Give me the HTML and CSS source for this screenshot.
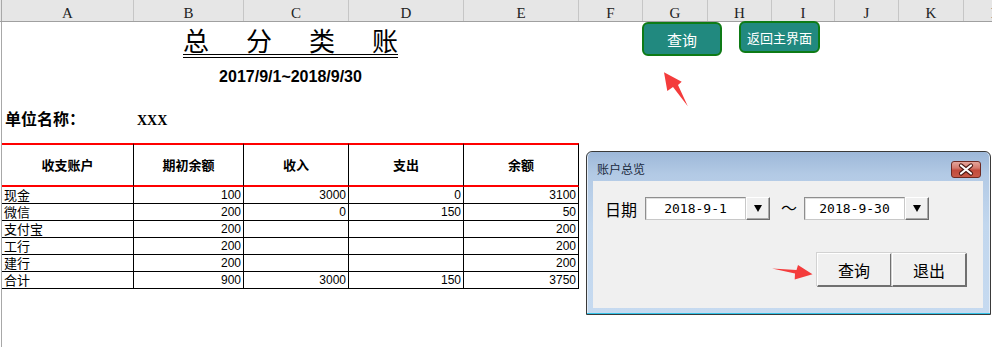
FILE: index.html
```html
<!DOCTYPE html>
<html lang="zh-CN">
<head>
<meta charset="utf-8">
<title>总分类账</title>
<link rel="stylesheet" href="styles.css">
</head>
<body>
<div class="colbar">
  <div class="corner"></div>
  <div class="ch w-a">A</div>
  <div class="ch w-b">B</div>
  <div class="ch w-c">C</div>
  <div class="ch w-d">D</div>
  <div class="ch w-e">E</div>
  <div class="ch w-f">F</div>
  <div class="ch w-g">G</div>
  <div class="ch w-h">H</div>
  <div class="ch w-i">I</div>
  <div class="ch w-j">J</div>
  <div class="ch w-k">K</div>
  <div class="ch w-l">L</div>
</div>

<div class="sheet">
  <div class="title-row">
    <h1 class="title"><span>总</span><span>分</span><span>类</span><span>账</span></h1>
  </div>
  <div class="date-row">2017/9/1~2018/9/30</div>
  <div class="unit-row">
    <span class="unit-label">单位名称：</span>
    <span class="unit-val">XXX</span>
  </div>

  <div class="tbl">
    <div class="th">收支账户</div>
    <div class="th">期初余额</div>
    <div class="th">收入</div>
    <div class="th">支出</div>
    <div class="th">余额</div>

    <div class="td lbl">现金</div><div class="td num">100</div><div class="td num">3000</div><div class="td num">0</div><div class="td num">3100</div>
    <div class="td lbl">微信</div><div class="td num">200</div><div class="td num">0</div><div class="td num">150</div><div class="td num">50</div>
    <div class="td lbl">支付宝</div><div class="td num">200</div><div class="td num"></div><div class="td num"></div><div class="td num">200</div>
    <div class="td lbl">工行</div><div class="td num">200</div><div class="td num"></div><div class="td num"></div><div class="td num">200</div>
    <div class="td lbl">建行</div><div class="td num">200</div><div class="td num"></div><div class="td num"></div><div class="td num">200</div>
    <div class="td lbl">合计</div><div class="td num">900</div><div class="td num">3000</div><div class="td num">150</div><div class="td num">3750</div>
  </div>
</div>

<button class="shape-btn btn-query">查询</button>
<button class="shape-btn btn-home">返回主界面</button>

<svg class="arrow arrow-up" width="32" height="40" viewBox="0 0 32 40">
  <polygon points="4,2.3 21.7,11.7 18,15 27.8,36.2 13,17 7.3,21"/>
</svg>

<div class="dialog">
  <div class="dlg-titlebar">
    <span class="dlg-title">账户总览</span>
    <button class="dlg-close" aria-label="关闭">
      <svg width="28" height="15" viewBox="0 0 28 15">
        <path d="M9 3.5 L19 11.5 M19 3.5 L9 11.5" stroke="#4a1712" stroke-width="4.2" stroke-linecap="round" fill="none"/>
        <path d="M9 3.5 L19 11.5 M19 3.5 L9 11.5" stroke="#ffffff" stroke-width="2.2" stroke-linecap="round" fill="none"/>
      </svg>
    </button>
  </div>
  <div class="dlg-client">
    <div class="date-line">
      <span class="dlg-label">日期</span>
      <span class="datebox">2018-9-1</span>
      <span class="dropbtn"><i class="tri"></i></span>
      <span class="tilde">～</span>
      <span class="datebox">2018-9-30</span>
      <span class="dropbtn"><i class="tri"></i></span>
    </div>
    <div class="dlg-actions">
      <button class="win-btn">查询</button>
      <button class="win-btn">退出</button>
    </div>
  </div>
</div>

<svg class="arrow arrow-right" width="46" height="20" viewBox="0 0 46 20">
  <polygon points="2,6.5 26.5,8 28,3 42.5,12.3 24.7,17.5 25,11.5"/>
</svg>
</body>
</html>
```

FILE: styles.css
```css
html, body {
  margin: 0;
  padding: 0;
}

body {
  position: relative;
  width: 992px;
  height: 347px;
  overflow: hidden;
  background: #ffffff;
  font-family: "Noto Sans CJK SC", "Liberation Sans", sans-serif;
  color: #000;
}

/* ---------- column header bar ---------- */
.colbar {
  display: flex;
  height: 22px;
  box-sizing: border-box;
  background: #e6e6e6;
  border-bottom: 1px solid #a0a0a0;
}

.corner {
  width: 2px;
  box-sizing: border-box;
  border-right: 1px solid #a8a8a8;
  flex: none;
}

.ch {
  flex: none;
  box-sizing: border-box;
  border-right: 1px solid #c6c6c6;
  text-align: center;
  font: 15px/18px "Liberation Serif", "DejaVu Serif", serif;
  color: #222;
  padding-top: 4px;
}

.w-a { width: 132px; }
.w-b { width: 110px; }
.w-c { width: 105px; }
.w-d { width: 115px; }
.w-e { width: 115px; }
.w-f { width: 64px; }
.w-g { width: 65px; }
.w-h { width: 64px; }
.w-i { width: 63px; }
.w-j { width: 64px; }
.w-k { width: 65px; }
.w-l { width: 64px; }

/* ---------- sheet ---------- */
.sheet {
  margin-left: 1px;
  border-left: 1px solid #a8a8a8;
  height: 325px;
  box-sizing: border-box;
}

.title-row {
  width: 577px;
  display: flex;
  justify-content: center;
  padding-top: 5px;
}

.title {
  margin: 0;
  display: flex;
  gap: 37px;
  font: 400 26px/26px "Noto Sans CJK SC", sans-serif;
  padding-bottom: 1px;
  border-bottom: 4px double #000;
}

.date-row {
  width: 577px;
  margin-top: 9px;
  height: 20px;
  text-align: center;
  font: 700 16px/20px "Liberation Sans", Arial, sans-serif;
}

.unit-row {
  margin-top: 21px;
  height: 20px;
  display: flex;
  align-items: baseline;
  line-height: 20px;
}

.unit-label {
  width: 132px;
  box-sizing: border-box;
  padding-left: 3px;
  font: 700 16px/20px "Noto Sans CJK SC", sans-serif;
}

.unit-val {
  padding-left: 3px;
  font: 700 14px/20px "Liberation Serif", serif;
}

/* ---------- table ---------- */
.tbl {
  margin-top: 15px;
  width: 577px;
  display: grid;
  grid-template-columns: 132px 110px 105px 115px 115px;
}

.th {
  height: 44px;
  box-sizing: border-box;
  border-top: 2px solid #ff0000;
  border-bottom: 2px solid #ff0000;
  border-right: 1px solid #000;
  display: flex;
  align-items: center;
  justify-content: center;
  font: 700 13px/16px "Noto Sans CJK SC", sans-serif;
}

.td {
  height: 17px;
  box-sizing: border-box;
  border-right: 1px solid #000;
  border-bottom: 1px solid #000;
  line-height: 16px;
  white-space: nowrap;
}

.lbl {
  padding: 1px 0 0 2px;
  font: 13px/15px "Liberation Sans", "Noto Sans CJK SC", sans-serif;
}

.num {
  text-align: right;
  padding-right: 2px;
  font: 12px/16px "Liberation Sans", Arial, sans-serif;
}

/* ---------- floating sheet buttons ---------- */
.shape-btn {
  position: absolute;
  box-sizing: border-box;
  margin: 0;
  padding: 0;
  background: #21897f;
  border: 2px solid #0e7b16;
  border-radius: 6px;
  color: #ffffff;
  font-family: "Noto Sans CJK SC", sans-serif;
  display: flex;
  align-items: center;
  justify-content: center;
}

.btn-query {
  left: 642px;
  top: 22px;
  width: 80px;
  height: 34px;
  font-size: 15px;
}

.btn-home {
  left: 739px;
  top: 21px;
  width: 81px;
  height: 32px;
  font-size: 13px;
}

.arrow {
  position: absolute;
  fill: #f43c3c;
}

.arrow-up {
  left: 660px;
  top: 70px;
}

.arrow-right {
  left: 770px;
  top: 262px;
}

/* ---------- dialog window ---------- */
.dialog {
  position: absolute;
  left: 586px;
  top: 151px;
  width: 405px;
  height: 164px;
  box-sizing: border-box;
  border: 1px solid #3a3a3a;
  border-radius: 6px 6px 0 0;
  background: linear-gradient(#9db8d9 0%, #b3cae5 14%, #c2d7ee 45%, #c6daf0 100%);
  box-shadow: inset 0 -1px 0 #32c3e8, inset 1px 0 0 #e2ecf7, inset -1px 0 0 #e2ecf7;
  padding: 0 7px 6px 6px;
  display: flex;
  flex-direction: column;
}

.dlg-titlebar {
  height: 29px;
  box-sizing: border-box;
  padding: 5px 2px 0 4px;
  display: flex;
  align-items: center;
  justify-content: space-between;
}

.dlg-title {
  font: 12px/16px "Noto Sans CJK SC", sans-serif;
  color: #1b2a3e;
}

.dlg-close {
  margin: 0;
  padding: 0;
  width: 30px;
  height: 17px;
  box-sizing: border-box;
  border: 1px solid #6e2a22;
  border-radius: 3px;
  background: linear-gradient(#e4a59b 0%, #d57a6d 40%, #c24a3b 55%, #c85a48 100%);
  display: flex;
  align-items: center;
  justify-content: center;
}

.dlg-close svg {
  display: block;
}

.dlg-client {
  flex: 1;
  background: #f0f0f0;
  padding: 16px 16px 0 12px;
  display: flex;
  flex-direction: column;
}

.date-line {
  display: flex;
  align-items: center;
  height: 23px;
}

.dlg-label {
  width: 32px;
  margin-right: 8px;
  font: 16px/20px "Noto Sans CJK SC", sans-serif;
}

.datebox {
  width: 101px;
  height: 23px;
  box-sizing: border-box;
  background: #ffffff;
  border: 1px solid #c8c8c8;
  border-top-color: #8e8e8e;
  border-left-color: #8e8e8e;
  box-shadow: inset 1px 1px 0 #e0e0e0;
  text-align: center;
  font: 13px/21px "DejaVu Sans Mono", "Liberation Mono", monospace;
  color: #000;
}

.dropbtn {
  width: 24px;
  height: 23px;
  box-sizing: border-box;
  background: #f0f0f0;
  border-top: 1px solid #ffffff;
  border-left: 1px solid #ffffff;
  border-right: 1px solid #6c6c6c;
  border-bottom: 1px solid #6c6c6c;
  box-shadow: inset -1px -1px 0 #a9a9a9;
  display: flex;
  align-items: center;
  justify-content: center;
}

.tri {
  width: 0;
  height: 0;
  border-left: 4px solid transparent;
  border-right: 4px solid transparent;
  border-top: 7px solid #000;
}

.tilde {
  margin: 0 7px 0 11px;
  width: 16px;
  font: 16px/20px "Noto Sans CJK SC", sans-serif;
  position: relative;
  top: -2px;
}

.dlg-actions {
  margin-top: 33px;
  display: flex;
  justify-content: flex-end;
}

.win-btn {
  margin: 0;
  padding: 0;
  width: 75px;
  height: 34px;
  box-sizing: border-box;
  background: #f0f0f0;
  border-top: 1px solid #ffffff;
  border-left: 1px solid #ffffff;
  border-right: 2px solid #707070;
  border-bottom: 2px solid #707070;
  box-shadow: -1px -1px 0 #d2d2d2;
  font: 16px/20px "Noto Sans CJK SC", sans-serif;
  color: #000;
}
```
